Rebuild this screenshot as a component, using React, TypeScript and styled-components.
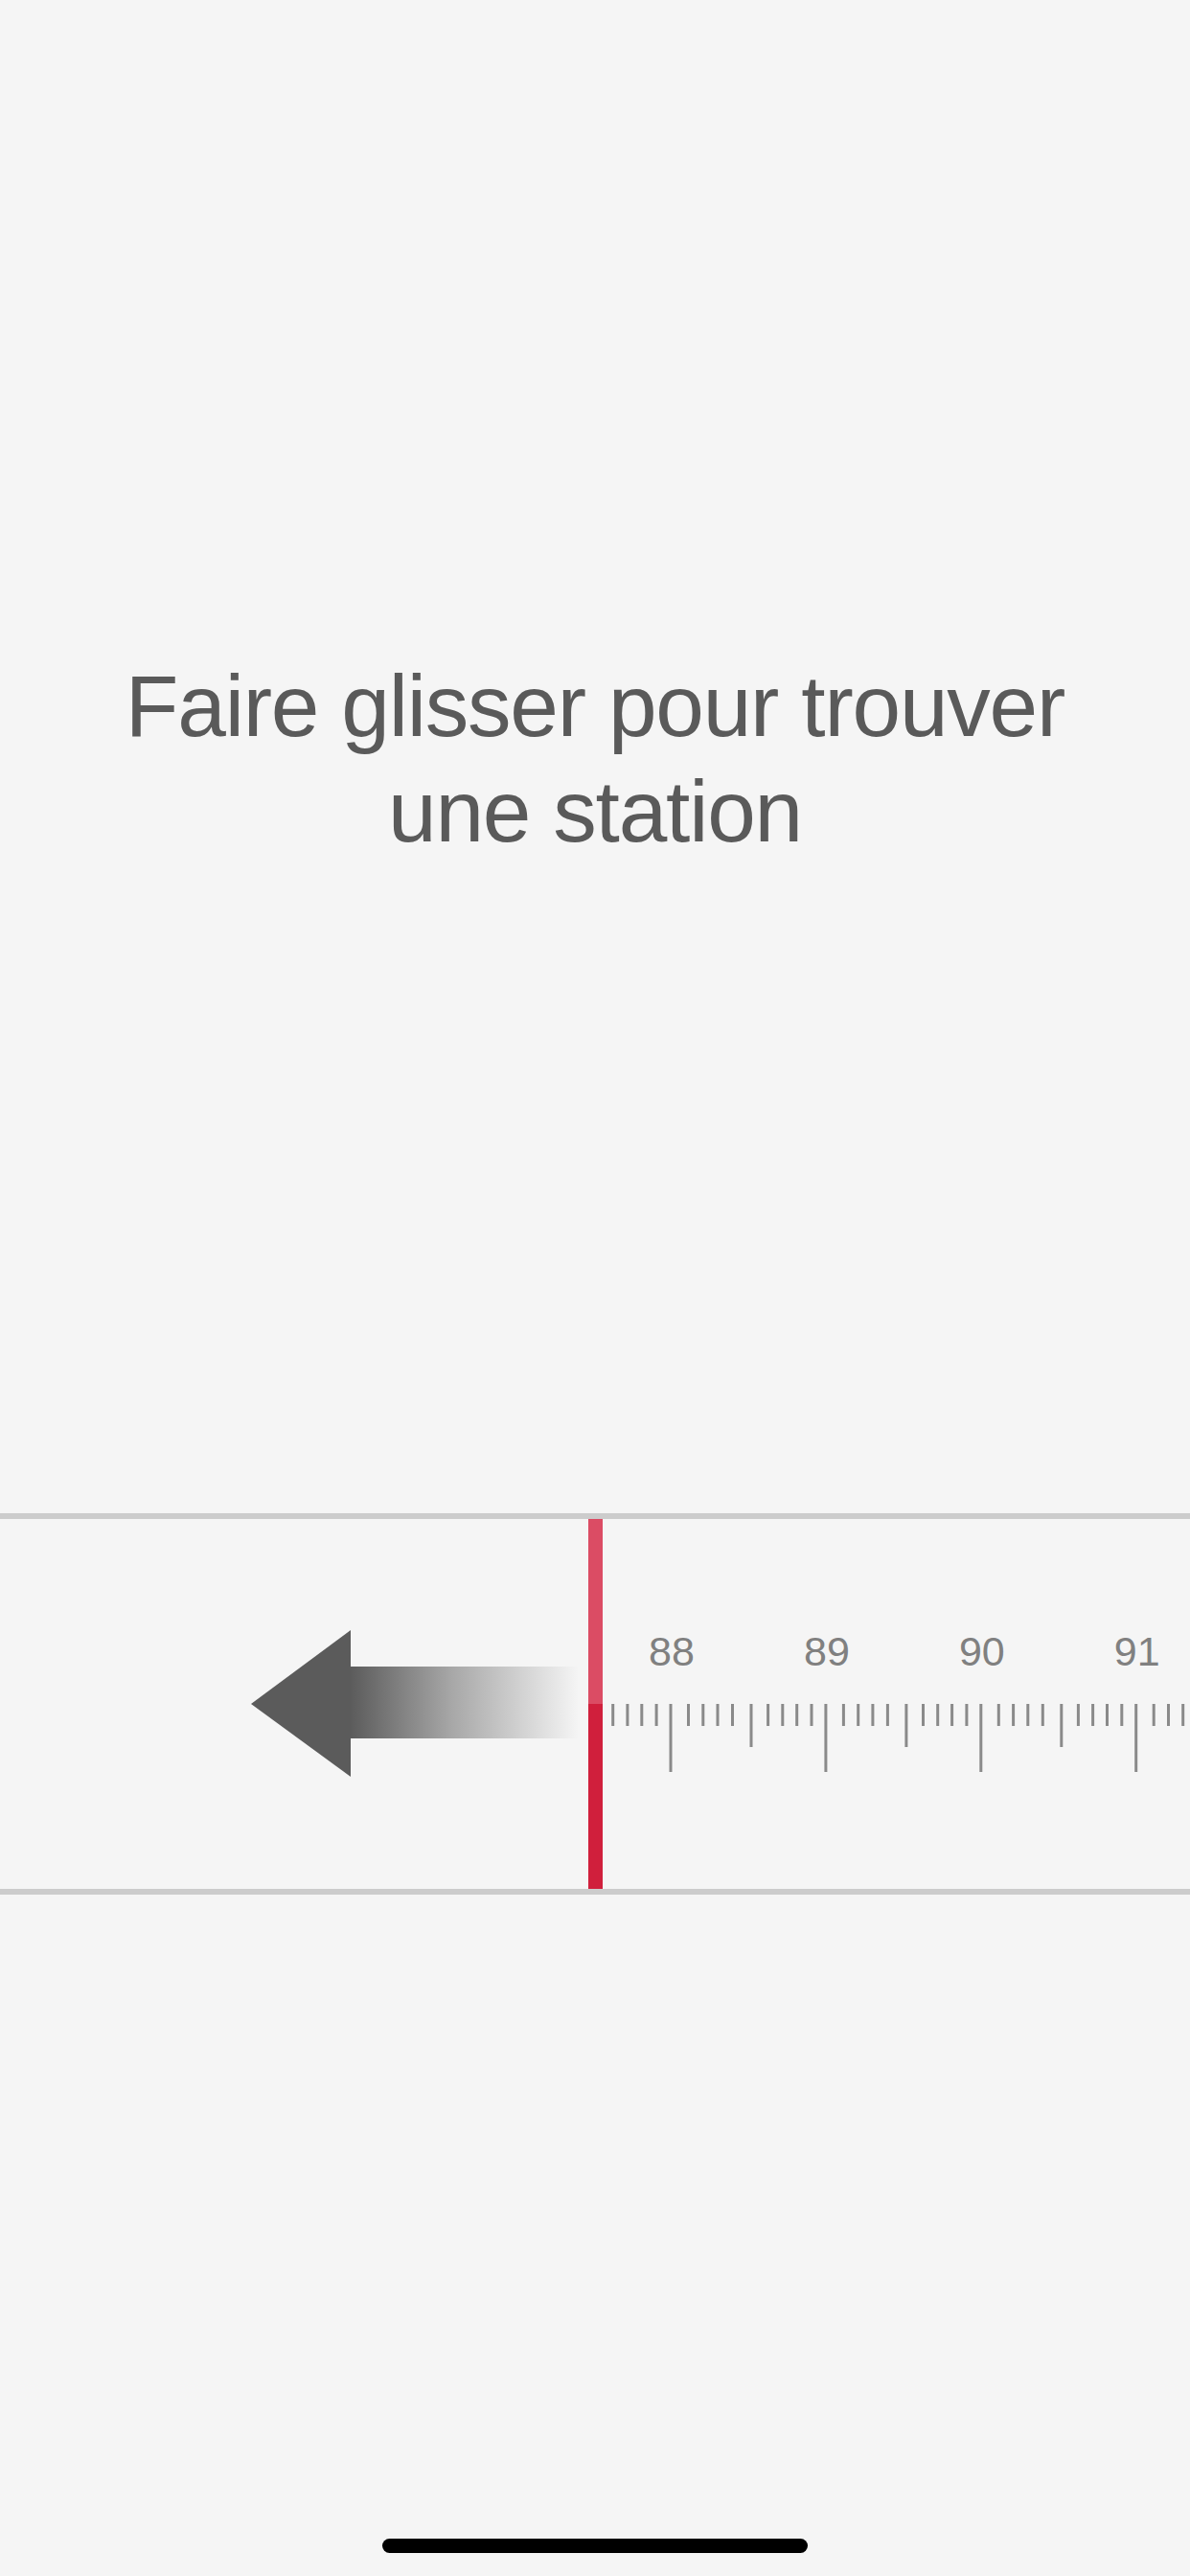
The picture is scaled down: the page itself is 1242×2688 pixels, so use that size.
import React from "react";
import styled, { createGlobalStyle } from "styled-components";

const GlobalStyle = createGlobalStyle`
  html, body {
    margin: 0;
    padding: 0;
    background: #f5f5f5;
  }
  * { box-sizing: border-box; }
`;

const Page = styled.div`
  width: 1242px;
  min-height: 2688px;
  background: #f5f5f5;
  display: flex;
  flex-direction: column;
  align-items: stretch;
  padding-top: 682px;
  padding-bottom: 24px;
  font-family: "Liberation Sans", Arial, sans-serif;
`;

const Title = styled.h1`
  margin: 0;
  font-weight: 400;
  font-size: 91px;
  line-height: 110px;
  letter-spacing: -1.2px;
  color: #5a5a5a;
  text-align: center;
`;

const Dial = styled.section`
  margin-top: 677px;
  height: 398px;
  border-top: 6px solid #cccccc;
  border-bottom: 6px solid #cccccc;
  display: flex;
  flex-direction: row;
  overflow: hidden;
`;

const HintArea = styled.div`
  width: 614px;
  flex: none;
  display: flex;
`;

const Needle = styled.div`
  width: 15px;
  flex: none;
  display: flex;
  flex-direction: column;
`;

const NeedleSegment = styled.div<{ $tone: "light" | "dark"; $grow?: boolean }>`
  background: ${(p) => (p.$tone === "light" ? "#db4c64" : "#d01f3c")};
  ${(p) => (p.$grow ? "flex: 1;" : "height: 193px; flex: none;")}
`;

const ScaleArea = styled.div`
  flex: 1;
  display: flex;
`;

const HomeIndicator = styled.div`
  margin: 672px auto 0;
  width: 444px;
  height: 15px;
  border-radius: 8px;
  background: #000000;
`;

const ArrowHint: React.FC = () => (
  <svg width="614" height="386" viewBox="0 0 614 386">
    <defs>
      <linearGradient id="shaftFade" x1="365" y1="0" x2="604" y2="0" gradientUnits="userSpaceOnUse">
        <stop offset="0" stopColor="#5b5b5b" stopOpacity="1" />
        <stop offset="0.45" stopColor="#5b5b5b" stopOpacity="0.5" />
        <stop offset="1" stopColor="#5b5b5b" stopOpacity="0" />
      </linearGradient>
    </defs>
    <polygon points="262,193 366,116 366,269" fill="#5b5b5b" />
    <rect x="365" y="154" width="240" height="75" fill="url(#shaftFade)" />
  </svg>
);

// offsets (px) of the ticks inside one MHz, index = tenth
const OFFSETS = [0, 18.5, 33.8, 49, 64.5, 84, 101.6, 116.8, 131.7, 147];
const MHZ_PX = 161.9;
const ORIGIN = 629; // left edge of scale area in page coordinates

type Tick = { x: number; kind: "major" | "medium" | "minor" };

const buildTicks = (): Tick[] => {
  const ticks: Tick[] = [];
  for (let mhz = 87; mhz <= 92; mhz++) {
    const base = 700 + (mhz - 88) * MHZ_PX;
    OFFSETS.forEach((off, i) => {
      const x = base + off - ORIGIN;
      if (x < 8 || x > 620) return;
      ticks.push({ x, kind: i === 0 ? "major" : i === 5 ? "medium" : "minor" });
    });
  }
  return ticks;
};

const TICK_LEN = { major: 71, medium: 45, minor: 23 };

const FrequencyScale: React.FC = () => {
  const ticks = buildTicks();
  const labels = [88, 89, 90, 91];
  return (
    <svg width="613" height="386" viewBox="0 0 613 386">
      {ticks.map((t, i) => (
        <rect key={i} x={t.x - 1.5} y={193} width={3} height={TICK_LEN[t.kind]} fill="#8a8a8a" />
      ))}
      {labels.map((n) => (
        <text
          key={n}
          x={700 + (n - 88) * MHZ_PX - ORIGIN + 1}
          y={153}
          textAnchor="middle"
          fontFamily='"Liberation Sans", Arial, sans-serif'
          fontSize="43"
          fill="#808080"
        >
          {n}
        </text>
      ))}
    </svg>
  );
};

export default function App() {
  return (
    <>
      <GlobalStyle />
      <Page>
        <Title>
          Faire glisser pour trouver
          <br />
          une station
        </Title>
        <Dial>
          <HintArea>
            <ArrowHint />
          </HintArea>
          <Needle>
            <NeedleSegment $tone="light" />
            <NeedleSegment $tone="dark" $grow />
          </Needle>
          <ScaleArea>
            <FrequencyScale />
          </ScaleArea>
        </Dial>
        <HomeIndicator />
      </Page>
    </>
  );
}
